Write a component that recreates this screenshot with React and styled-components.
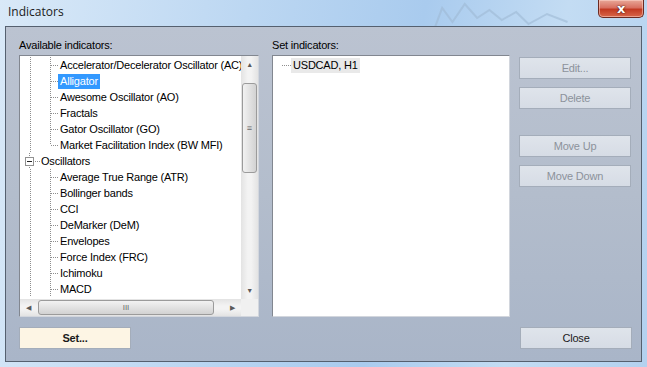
import React from 'react'
import styled, { createGlobalStyle } from 'styled-components'

const GlobalStyle = createGlobalStyle`
  html, body {
    margin: 0;
    padding: 0;
    background: #c6dbf1;
  }
  * { box-sizing: border-box; }
`

const Window = styled.div`
  width: 647px;
  height: 367px;
  display: flex;
  flex-direction: column;
  padding: 0 5px 5px 5px;
  font-family: "Liberation Sans", Arial, sans-serif;
  font-size: 11px;
  letter-spacing: -0.2px;
  color: #000;
  background: linear-gradient(100deg, #d9e9f8 0%, #bcd7f2 35%, #a9cbee 60%, #c3dcf3 80%, #b3d1ef 100%);
  overflow: hidden;
`

const TitleBar = styled.div`
  height: 26px;
  display: flex;
  align-items: flex-start;
  flex-shrink: 0;
`

const Title = styled.div`
  font-family: "Open Sans", "Liberation Sans", sans-serif;
  font-size: 12px;
  letter-spacing: 0;
  line-height: 12px;
  padding: 6px 0 0 3px;
  color: #1b1b1b;
`

const Glass = styled.svg`
  flex: 1;
  height: 26px;
`

const CloseX = styled.div`
  width: 46px;
  height: 18px;
  margin-right: -2px;
  border: 1px solid #6b2a22;
  border-top: none;
  border-radius: 0 0 5px 5px;
  background: linear-gradient(180deg, #e8a898 0%, #d87060 45%, #c23a22 55%, #d8664a 100%);
  box-shadow: inset 0 0 0 1px rgba(255, 220, 210, 0.5);
  display: flex;
  align-items: center;
  justify-content: center;
  color: #fff;
  font-family: "DejaVu Sans", sans-serif;
  font-weight: bold;
  font-size: 13px;
  text-shadow: 0 0 2px #4a1a12, 0 0 1px #4a1a12;
`

const Client = styled.div`
  flex: 1;
  border: 1px solid #55606f;
  background: linear-gradient(180deg, #bbc3d1 0%, #b3bdcc 50%, #a9b5c8 100%);
  display: flex;
  flex-direction: column;
  padding: 10px 9px 12px 13px;
`

const Main = styled.div`
  display: flex;
  gap: 13px;
`

const Panel = styled.div`
  display: flex;
  flex-direction: column;
  width: ${p => p.$width}px;
`

const Label = styled.div`
  height: 16px;
  line-height: 16px;
  margin-bottom: 2px;
  white-space: nowrap;
`

const Box = styled.div`
  height: 262px;
  background: #fff;
  border: 1px solid #828790;
  border-right-color: #d2d6dd;
  border-bottom-color: #d2d6dd;
`

const TreeBox = styled(Box)`
  display: grid;
  grid-template-columns: 1fr 17px;
  grid-template-rows: 1fr 17px;
`

const TreeBody = styled.div`
  overflow: hidden;
  padding-top: 1px;
`

const Row = styled.div`
  display: flex;
  height: 16px;
  align-items: stretch;
  white-space: nowrap;
`

const dots = '#8e8e8e'
const vLine = `repeating-linear-gradient(to bottom, ${dots} 0 1px, transparent 1px 2px)`
const hLine = `repeating-linear-gradient(to right, ${dots} 0 1px, transparent 1px 2px)`

// one indent cell of the tree: dotted vertical guide and/or a branch stub
const Guide = styled.span`
  width: ${p => p.$width || 20}px;
  flex-shrink: 0;
  display: flex;
  align-items: center;
  background-image: ${p => [
    p.$line ? vLine : null,
    p.$branch ? hLine : null
  ].filter(Boolean).join(', ') || 'none'};
  background-size: ${p => [
    p.$line === 'full' ? '1px 100%' : p.$line === 'top' ? '1px 8px' : null,
    p.$branch ? `${p.$branchLen || 8}px 1px` : null
  ].filter(Boolean).join(', ') || 'auto'};
  background-position: ${p => [
    p.$line ? `${p.$lineX ?? 10}px 0` : null,
    p.$branch ? `${p.$branchX ?? 11}px 8px` : null
  ].filter(Boolean).join(', ') || '0 0'};
  background-repeat: no-repeat;
`

const Expander = styled.span`
  width: 9px;
  height: 9px;
  margin-left: 5px;
  border: 1px solid #919191;
  background: #fff;
  display: flex;
  align-items: center;
  justify-content: center;
  &::after {
    content: '';
    width: 5px;
    height: 1px;
    background: #222;
  }
`

const NodeText = styled.span`
  padding: 0 2px;
  margin-left: ${p => p.$offset || 0}px;
  line-height: 15px;
  height: 15px;
  align-self: center;
  background: ${p => (p.$selected ? '#3399ff' : p.$inactive ? '#e9e9e9' : 'transparent')};
  color: ${p => (p.$selected ? '#fff' : '#000')};
`

const VScroll = styled.div`
  display: flex;
  flex-direction: column;
  background: linear-gradient(90deg, #e3e3e3, #f3f3f3 40%, #f3f3f3 60%, #e3e3e3);
`

const HScroll = styled.div`
  display: flex;
  align-items: stretch;
  background: linear-gradient(180deg, #e3e3e3, #f3f3f3 40%, #f3f3f3 60%, #e3e3e3);
`

const Corner = styled.div`
  background: #f0f0f0;
`

const Arrow = styled.div`
  width: 17px;
  height: 17px;
  flex-shrink: 0;
  display: flex;
  align-items: center;
  justify-content: center;
  color: #5a5a5a;
  font-size: 7px;
  line-height: 7px;
`

const Track = styled.div`
  flex: 1;
  display: flex;
  flex-direction: ${p => (p.$vertical ? 'column' : 'row')};
`

const Thumb = styled.div`
  border: 1px solid #9b9b9b;
  border-radius: 3px;
  display: flex;
  align-items: center;
  justify-content: center;
  color: #6a6a6a;
  letter-spacing: 0;
  ${p => p.$vertical ? `
    margin: 10px 1px 0 1px;
    height: 90px;
    background: linear-gradient(90deg, #f2f2f2, #e2e2e2 50%, #d2d2d2);
    font-size: 9px;
  ` : `
    margin: 1px 0 1px 1px;
    width: 176px;
    background: linear-gradient(180deg, #f2f2f2, #e2e2e2 50%, #d2d2d2);
    font-size: 8px;
  `}
`

const ListBody = styled.div`
  padding-top: 1px;
`

const ButtonColumn = styled.div`
  display: flex;
  flex-direction: column;
  width: 112px;
  margin-left: -4px;
  padding-top: 20px;
`

const Button = styled.div`
  width: 112px;
  height: 22px;
  margin-top: ${p => p.$gap || 0}px;
  border: 1px solid #a4adba;
  background: ${p => (p.$accent ? '#fdf5e4' : 'linear-gradient(180deg, #dfe4eb, #d6dce5)')};
  color: ${p => (p.$disabled ? '#8c929b' : '#1a1a1a')};
  font-weight: ${p => (p.$accent ? 'bold' : 'normal')};
  display: flex;
  align-items: center;
  justify-content: center;
  font-size: 11px;
`

const Footer = styled.div`
  display: flex;
  justify-content: space-between;
  margin-top: 10px;
`

const groupA = [
  'Accelerator/Decelerator Oscillator (AC)',
  'Alligator',
  'Awesome Oscillator (AO)',
  'Fractals',
  'Gator Oscillator (GO)',
  'Market Facilitation Index (BW MFI)'
]

const groupB = [
  'Average True Range (ATR)',
  'Bollinger bands',
  'CCI',
  'DeMarker (DeM)',
  'Envelopes',
  'Force Index (FRC)',
  'Ichimoku',
  'MACD'
]

const Child = ({ text, last, selected }) => (
  <Row>
    <Guide $line="full" />
    <Guide $line={last ? 'top' : 'full'} $branch $branchLen={7} />
    <NodeText $selected={selected} $offset={-2}>{text}</NodeText>
  </Row>
)

const App = () => (
  <>
    <GlobalStyle />
    <Window>
      <TitleBar>
        <Title>Indicators</Title>
        <Glass viewBox="0 0 520 26" preserveAspectRatio="none">
          <polyline
            points="360,30 368,8 378,22 390,4 402,18 414,10 426,20 440,12 452,24 470,14 490,22"
            fill="none"
            stroke="#9fb9d4"
            strokeWidth="2"
            opacity="0.6"
          />
        </Glass>
        <CloseX>x</CloseX>
      </TitleBar>
      <Client>
        <Main>
          <Panel $width={240}>
            <Label>Available indicators:</Label>
            <TreeBox>
              <TreeBody>
                {groupA.map((t, i) => (
                  <Child key={t} text={t} selected={i === 1} last={i === groupA.length - 1} />
                ))}
                <Row>
                  <Guide $line="full" $lineX={9} $branch $branchX={15} $branchLen={5}>
                    <Expander />
                  </Guide>
                  <NodeText $offset={-1}>Oscillators</NodeText>
                </Row>
                {groupB.map(t => (
                  <Child key={t} text={t} />
                ))}
              </TreeBody>
              <VScroll>
                <Arrow>▲</Arrow>
                <Track $vertical>
                  <Thumb $vertical>≡</Thumb>
                </Track>
                <Arrow>▼</Arrow>
              </VScroll>
              <HScroll>
                <Arrow>◀</Arrow>
                <Track>
                  <Thumb>III</Thumb>
                </Track>
                <Arrow>▶</Arrow>
              </HScroll>
              <Corner />
            </TreeBox>
          </Panel>
          <Panel $width={238}>
            <Label>Set indicators:</Label>
            <Box>
              <ListBody>
                <Row>
                  <Guide $branch $branchX={9} $branchLen={9} />
                  <NodeText $inactive $offset={-2}>USDCAD, H1</NodeText>
                </Row>
              </ListBody>
            </Box>
          </Panel>
          <ButtonColumn>
            <Button $disabled>Edit...</Button>
            <Button $disabled $gap={8}>Delete</Button>
            <Button $disabled $gap={26}>Move Up</Button>
            <Button $disabled $gap={8}>Move Down</Button>
          </ButtonColumn>
        </Main>
        <Footer>
          <Button $accent>Set...</Button>
          <Button>Close</Button>
        </Footer>
      </Client>
    </Window>
  </>
)

export default App
